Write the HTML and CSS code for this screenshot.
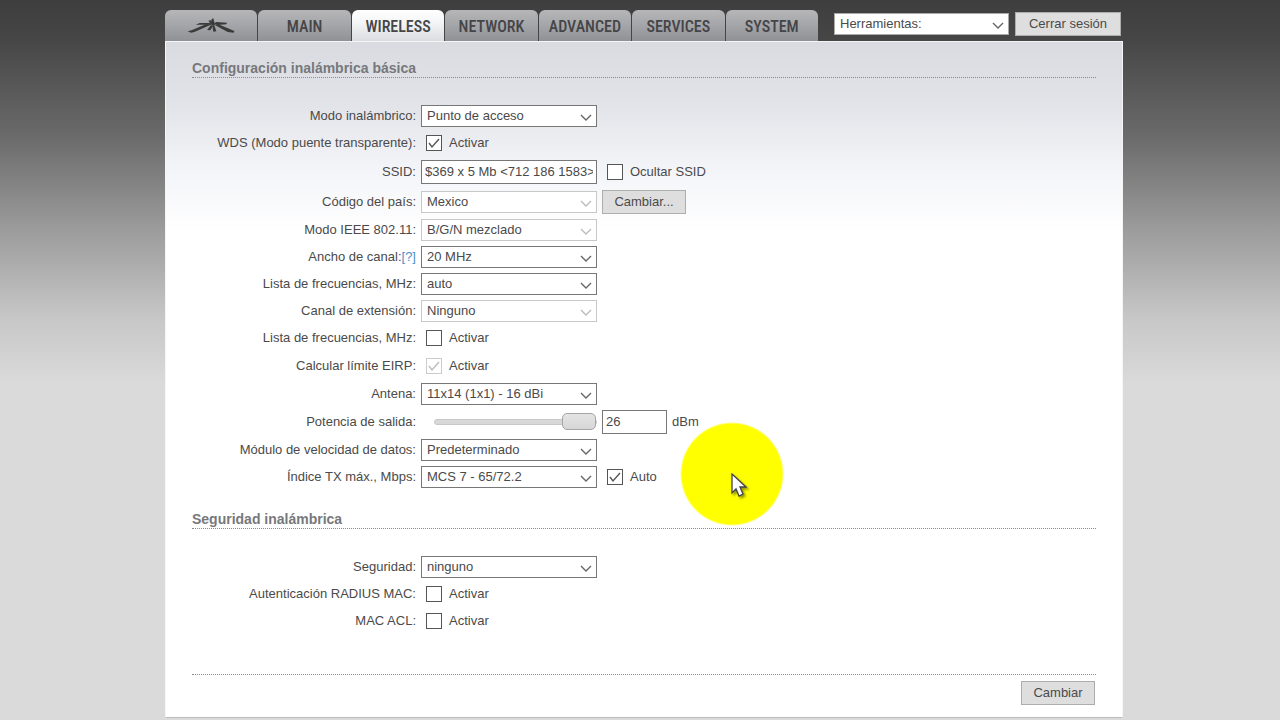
FILE: index.html
```html
<!DOCTYPE html>
<html lang="es">
<head>
  <meta charset="UTF-8">
  <meta name="viewport" content="width=device-width, initial-scale=1.0">
  <title>Wireless</title>
  <link rel="stylesheet" href="styles.css">
</head>
<body>
  <div class="page">
    <header class="topbar">
      <nav class="tabs">
        <a class="tab" href="#" aria-label="Ubiquiti">
          <svg class="logo" width="48" height="18" viewBox="18 9 144 54">
            <path d="M20 49 L32 46 L76 27 L88 30 L40 51 L30 53 Z"/>
            <path d="M44 29 L56 24 L88 24 L92 30 L70 29 Z"/>
            <path d="M92 12 L97 10 L102 29 L96 33 L90 27 Z"/>
            <path d="M78 45 L90 30 L96 32 L88 46 Z"/>
            <path d="M94 32 L100 31 L106 49 L97 50 Z"/>
            <path d="M98 26 L106 21 L138 23 L136 28 L110 30 Z"/>
            <path d="M100 29 L112 28 L160 48 L158 53 L140 51 Z"/>
            <path d="M82 17 L90 16 L96 26 L90 28 Z"/>
          </svg>
        </a>
        <a class="tab" href="#">MAIN</a>
        <a class="tab active" href="#">WIRELESS</a>
        <a class="tab" href="#">NETWORK</a>
        <a class="tab" href="#">ADVANCED</a>
        <a class="tab" href="#">SERVICES</a>
        <a class="tab" href="#">SYSTEM</a>
      </nav>
      <div class="tools">
        <select class="tools-select" aria-label="Herramientas"><option>Herramientas:</option></select>
        <button class="btn logout" type="button">Cerrar sesión</button>
      </div>
    </header>

    <form class="panel">
      <h2>Configuración inalámbrica básica</h2>
      <div class="rows">
        <div class="row">
          <label class="name" for="mode">Modo inalámbrico:</label>
          <select id="mode"><option>Punto de acceso</option></select>
        </div>
        <div class="row">
          <label class="name" for="wds">WDS (Modo puente transparente):</label>
          <input type="checkbox" id="wds" checked><label for="wds">Activar</label>
        </div>
        <div class="row taller">
          <label class="name" for="ssid">SSID:</label>
          <input type="text" id="ssid" class="ssid" value="$369 x 5 Mb &lt;712 186 1583&gt;">
          <input type="checkbox" id="hide-ssid"><label for="hide-ssid">Ocultar SSID</label>
        </div>
        <div class="row tall">
          <label class="name" for="country">Código del país:</label>
          <select id="country" disabled><option>Mexico</option></select>
          <button class="btn change" type="button">Cambiar...</button>
        </div>
        <div class="row">
          <label class="name" for="ieee">Modo IEEE 802.11:</label>
          <select id="ieee" disabled><option>B/G/N mezclado</option></select>
        </div>
        <div class="row">
          <div class="name"><label for="chanbw">Ancho de canal:</label><a class="help" href="#">[?]</a></div>
          <select id="chanbw"><option>20 MHz</option></select>
        </div>
        <div class="row">
          <label class="name" for="freq">Lista de frecuencias, MHz:</label>
          <select id="freq"><option>auto</option></select>
        </div>
        <div class="row">
          <label class="name" for="ext">Canal de extensión:</label>
          <select id="ext" disabled><option>Ninguno</option></select>
        </div>
        <div class="row">
          <label class="name" for="scan">Lista de frecuencias, MHz:</label>
          <input type="checkbox" id="scan"><label for="scan">Activar</label>
        </div>
        <div class="row tall">
          <label class="name" for="eirp">Calcular límite EIRP:</label>
          <input type="checkbox" id="eirp" checked disabled><label for="eirp">Activar</label>
        </div>
        <div class="row">
          <label class="name" for="antenna">Antena:</label>
          <select id="antenna"><option>11x14 (1x1) - 16 dBi</option></select>
        </div>
        <div class="row tall">
          <label class="name" for="power">Potencia de salida:</label>
          <input type="range" id="power" min="0" max="26" value="26">
          <input type="text" id="dbm" class="dbm" value="26"><label for="dbm">dBm</label>
        </div>
        <div class="row">
          <label class="name" for="rate">Módulo de velocidad de datos:</label>
          <select id="rate"><option>Predeterminado</option></select>
        </div>
        <div class="row">
          <label class="name" for="mcs">Índice TX máx., Mbps:</label>
          <select id="mcs"><option>MCS 7 - 65/72.2</option></select>
          <input type="checkbox" id="auto" checked><label for="auto">Auto</label>
        </div>
      </div>

      <h2>Seguridad inalámbrica</h2>
      <div class="rows">
        <div class="row">
          <label class="name" for="security">Seguridad:</label>
          <select id="security"><option>ninguno</option></select>
        </div>
        <div class="row">
          <label class="name" for="radius">Autenticación RADIUS MAC:</label>
          <input type="checkbox" id="radius"><label for="radius">Activar</label>
        </div>
        <div class="row">
          <label class="name" for="acl">MAC ACL:</label>
          <input type="checkbox" id="acl"><label for="acl">Activar</label>
        </div>
      </div>

      <div class="actions">
        <button class="btn submit" type="submit">Cambiar</button>
      </div>
    </form>
  </div>

  <!-- click highlight and pointer -->
  <div class="spot">
    <svg width="16" height="26" viewBox="0 0 16 26">
      <path d="M1 1 L1 20 L5 16 L8 23 L12 21 L9 14 L15 14 Z" fill="#fff" stroke="#444" stroke-width="1.3"/>
    </svg>
  </div>
</body>
</html>
```
FILE: styles.css
```css
* { box-sizing: border-box; }
body { margin: 0; padding: 10px 0 2px 8px; font: 13px/16px "Liberation Sans", Arial, sans-serif; color: #4a4a4a; background: #dadada linear-gradient(#3e3e3e 0, #464646 40px, #6b6b6b 138px, #9c9c9c 230px, #c8c8c8 321px, #dadada 383px) no-repeat; }
.page { max-width: 958px; margin: 0 auto; }

.topbar { display: flex; justify-content: space-between; }
.tabs { display: flex; flex: 0 1 653px; gap: 1px; }
.tab { flex: 1 1 0; display: flex; align-items: center; justify-content: center; height: 31px; padding-top: 2px; border-radius: 6px 6px 0 0; background: linear-gradient(#b6b6b8, #a4a5a8 50%, #8f9196); color: #454548; font: 500 16px/20px "Liberation Sans Narrow", "Roboto Condensed", Roboto, sans-serif; text-decoration: none; }
.tab.active { background: linear-gradient(#fff, #f4f5f6 40%, #dadce0); }
.logo { fill: #3a3a3a; }
.tools { display: flex; align-items: center; gap: 6px; height: 28px; padding-right: 2px; }

.panel { padding: 18px 26px 12px; border: 1px solid #f4f5f7; border-bottom-color: #bbb; background: linear-gradient(#d9dbe0 0, #e2e3e8 60px, #f3f4f8 125px, #fff 190px); }
h2 { margin: 0; height: 18px; border-bottom: 1px dotted #8c8c8c; font-size: 14px; line-height: 16px; color: #77787c; }
.rows { display: flex; flex-direction: column; gap: 5px; padding: 27px 0 23px; }
.row { display: flex; align-items: center; gap: 5px; height: 22px; }
.tall { height: 24px; }
.taller { height: 26px; }
.name { width: 224px; text-align: right; white-space: nowrap; }
.help { color: #4a90c8; text-decoration: none; }

select, input, button { margin: 0; font: inherit; color: inherit; }
select { appearance: none; width: 176px; height: 22px; padding: 0 20px 0 5px; border: 1px solid #777; border-radius: 0; background: #fff url("data:image/svg+xml,%3Csvg xmlns='http://www.w3.org/2000/svg' width='12' height='8'%3E%3Cpath d='M1 1l5 5 5-5' fill='none' stroke='%23666' stroke-width='1.4'/%3E%3C/svg%3E") no-repeat right 4px top 8px; }
select:disabled { opacity: 1; color: inherit; border-color: #c8c8c8; background-image: url("data:image/svg+xml,%3Csvg xmlns='http://www.w3.org/2000/svg' width='12' height='8'%3E%3Cpath d='M1 1l5 5 5-5' fill='none' stroke='%23bbb' stroke-width='1.4'/%3E%3C/svg%3E"); }
.tools-select { width: 175px; border-color: #aaa; }
input[type="text"] { height: 24px; padding: 0 3px 2px; border: 1px solid #777; background: #fff; }
.ssid { width: 176px; }
input.dbm { width: 65px; }
input[type="checkbox"] { appearance: none; width: 16px; height: 16px; margin: 0 2px 0 5px; border: 1px solid #555; background: #fff center no-repeat; }
input[type="checkbox"]:checked { background-image: url("data:image/svg+xml,%3Csvg xmlns='http://www.w3.org/2000/svg' width='14' height='14'%3E%3Cpath d='M2 7l3 4 7-8' fill='none' stroke='%23555' stroke-width='1.4'/%3E%3C/svg%3E"); }
input[type="checkbox"]:disabled { border-color: #ccc; background-image: url("data:image/svg+xml,%3Csvg xmlns='http://www.w3.org/2000/svg' width='14' height='14'%3E%3Cpath d='M2 7l3 4 7-8' fill='none' stroke='%23bbb' stroke-width='1.4'/%3E%3C/svg%3E"); }

input[type="range"] { appearance: none; width: 163px; height: 18px; margin-left: 13px; background: none; }
input[type="range"]::-webkit-slider-runnable-track { height: 6px; border: 1px solid #c8c8c8; border-radius: 3px; background: #d8d8d8; }
input[type="range"]::-webkit-slider-thumb { appearance: none; width: 34px; height: 17px; margin-top: -7px; border: 1px solid #a5a5a5; border-radius: 5px; background: linear-gradient(#e4e4e4, #d6d6d6); }

.btn { height: 24px; padding: 0; border: 1px solid #adadad; background: #dedede; }
.logout { width: 106px; }
.change { width: 84px; }
.submit { width: 74px; }
.actions { display: flex; justify-content: flex-end; margin-top: 19px; padding: 6px 1px 0; border-top: 1px dotted #8c8c8c; }

.spot { position: absolute; left: 680px; top: 422px; width: 104px; height: 104px; padding: 51px 0 0 51px; border-radius: 50%; background: radial-gradient(closest-side, #ff0 96%, rgba(255, 255, 0, 0)); }
.spot svg { display: block; filter: drop-shadow(2px 2px 1px rgba(0, 0, 0, 0.4)); }
```
